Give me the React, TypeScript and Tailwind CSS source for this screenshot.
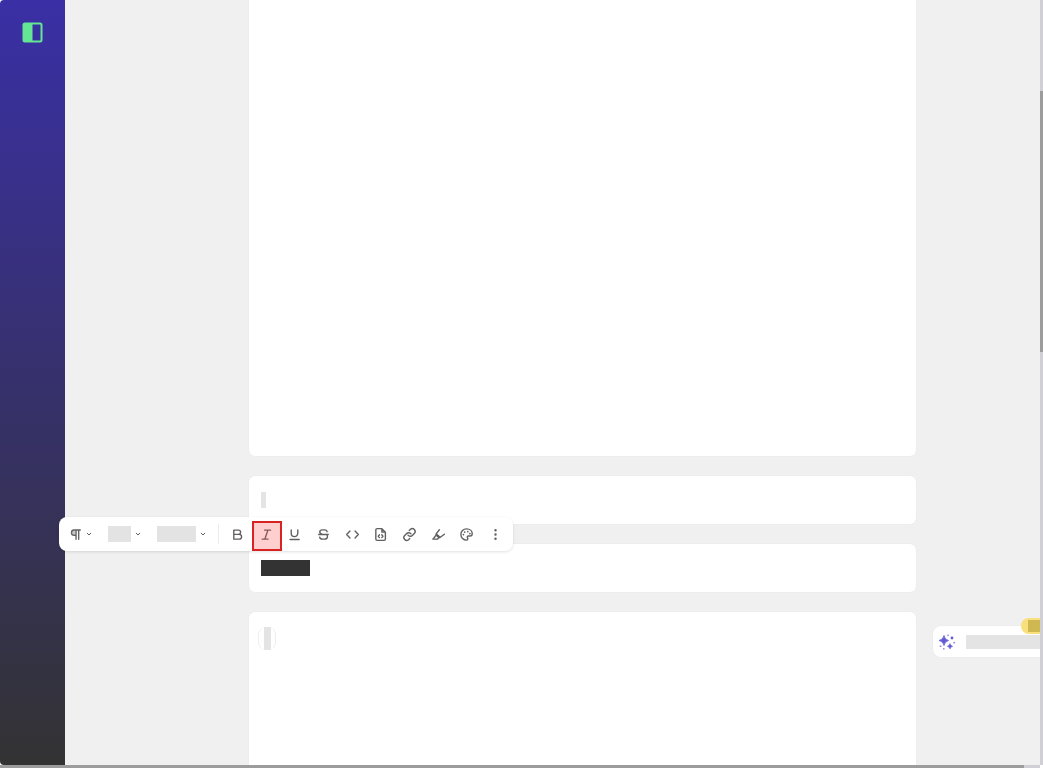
import type { ReactNode } from 'react'

type Tool = {
  name: string
  icon: ReactNode
  active?: boolean
}

const Icon = ({ children }: { children: ReactNode }) => (
  <svg
    viewBox="0 0 16 16"
    className="size-[17px] shrink-0"
    fill="none"
    stroke="currentColor"
    strokeWidth="1.3"
    strokeLinecap="round"
    strokeLinejoin="round"
  >
    {children}
  </svg>
)

const Chevron = () => (
  <svg viewBox="0 0 6 6" className="size-1.5 shrink-0" fill="none" stroke="currentColor" strokeLinecap="round">
    <path d="M1.2 2.2 3 4l1.8-1.8" />
  </svg>
)

const tools: Tool[] = [
  {
    name: 'Bold',
    icon: <path d="M4.5 3.9h4.4a2 2 0 0 1 0 4H4.5zM4.5 7.900h5.100a2.200 2.200 0 0 1 0 4.500H4.500z" />
  },
  {
    name: 'Italic',
    active: true,
    icon: <path d="M6.2 3.9h5.6M3.9 12.300h5.6M9.3 3.9 6.5 12.300" />
  },
  {
    name: 'Underline',
    icon: <path d="M4.9 3.7v3.2a3.1 3.1 0 0 0 6.2 0V3.7M3.8 12.7h8.6" />
  },
  {
    name: 'Strikethrough',
    icon: (
      <path d="M11.4 5.4c-.2-1.100-1.100-1.700-2.400-1.700H7C5.600 3.700 4.500 4.400 4.500 5.700c0 1.400 1.200 1.900 2.700 2.300M3.500 8h9M11 8.300c.5.400.7.900.7 1.600 0 1.500-1.200 2.500-2.700 2.500H7c-1.400 0-2.400-.7-2.600-1.900" />
    )
  },
  {
    name: 'Code',
    icon: <path d="M5.600 4.800 2.500 8l3.100 3.200M10.400 4.800 13.500 8l-3.100 3.200" />
  },
  {
    name: 'Code block',
    icon: (
      <>
        <path d="M9.300 2.500H4.800c-.7 0-1.200.5-1.200 1.200v8.600c0 .7.500 1.200 1.200 1.200h6.600c.7 0 1.200-.5 1.200-1.200V5.800zM9.300 2.500v3.300h3.300" />
        <path d="M7 8.300 5.900 9.600 7 10.900M9.200 8.300l1.100 1.300-1.100 1.300" />
      </>
    )
  },
  {
    name: 'Link',
    icon: (
      <>
        <path d="M6.600 8.600a2.700 2.700 0 0 0 4.100.3l2-2a2.700 2.700 0 0 0-3.800-3.800L7.800 4.200" />
        <path d="M9.400 7.400a2.700 2.700 0 0 0-4.100-.3l-2 2a2.700 2.700 0 0 0 3.800 3.800l1.100-1.100" />
      </>
    )
  },
  {
    name: 'Highlight',
    icon: <path d="M8.800 3.500 5.800 7.400c-.3.500-.2 1 .2 1.400l2 1.900c.4.400 1 .4 1.400.1l4.100-3.100M5.700 8.700 2.700 12.400h4.300l1.300-1.500M6.300 7.800l3.200 2.800" />
  },
  {
    name: 'Color',
    icon: (
      <>
        <path d="M8 2.700a5.300 5.300 0 0 0 0 10.600c.9 0 1.300-.6 1.300-1.200 0-.9-.6-1-.6-1.700 0-.6.500-1 1.100-1h1.500c1.300 0 2.100-.8 2.100-2.100C13.400 4.700 11.100 2.700 8 2.700z" />
        <path d="M5.100 8.100h.01M6.300 5.700h.01M9.200 5.200h.01M11.200 7.100h.01" strokeWidth="1.600" />
      </>
    )
  },
  {
    name: 'More options',
    icon: <path d="M8 4h.01M8 8h.01M8 12h.01" strokeWidth="2.300" />
  }
]

const Sidebar = () => (
  <nav className="flex w-[65px] shrink-0 justify-center rounded-l-sm bg-linear-to-b/srgb from-[#3a2fa5] to-[#333333] pt-[22px]">
    <button type="button" aria-label="Toggle sidebar" className="size-[21px] text-[#64e695]">
      <svg viewBox="0 0 21 21" className="size-[21px]">
        <rect x="1.500" y="1.500" width="18" height="18" rx="1.500" fill="none" stroke="currentColor" strokeWidth="2" />
        <path d="M1.500 1.500h9v18h-9z" fill="currentColor" />
      </svg>
    </button>
  </nav>
)

const Toolbar = () => (
  <div
    role="toolbar"
    aria-label="Text formatting"
    className="absolute top-[517px] left-[59px] flex h-[34px] w-[454px] items-center rounded-lg bg-white pl-2 text-[#606060] shadow-[0_1px_3px_rgba(0,0,0,0.12)]"
  >
    <button type="button" aria-label="Paragraph style" className="flex items-center gap-0.5">
      <Icon>
        <path d="M8.300 8.700H6.700a2.400 2.400 0 0 1 0-4.900h5.800M8.500 3.800v8.700M11 3.800v8.700" />
        <path d="M6.500 4.400h1.400v3.700H6.500a1.800 1.800 0 0 1 0-3.700z" fill="currentColor" fillOpacity=".35" stroke="none" />
      </Icon>
      <Chevron />
    </button>
    <button type="button" aria-label="Font" className="ml-4 flex items-center gap-1">
      <span className="h-4 w-[23px] bg-[#e3e3e3]" />
      <Chevron />
    </button>
    <button type="button" aria-label="Font size" className="ml-4 flex items-center gap-1">
      <span className="h-4 w-[39px] bg-[#e3e3e3]" />
      <Chevron />
    </button>
    <span className="ml-3 h-5 w-px bg-[#ececec]" />
    <div className="mr-[3px] ml-1 flex flex-1">
      {tools.map(({ name, icon, active }) => (
        <button
          key={name}
          type="button"
          aria-label={name}
          aria-pressed={active}
          className="relative flex h-[30px] flex-1 items-center justify-center"
        >
          <Icon>{icon}</Icon>
          {active && (
            <span className="absolute top-0.5 -right-0.5 -bottom-0.5 left-0 border-2 border-[#d92323] bg-[#ff3b3b]/25" />
          )}
        </button>
      ))}
    </div>
  </div>
)

const Assistant = () => (
  <div className="relative mt-[626px] ml-[17px] flex h-[31px] items-center rounded-l-lg bg-white pl-[5px] shadow-[0_0_2px_rgba(0,0,0,0.05)]">
    <svg viewBox="0 0 18 18" className="size-[18px] shrink-0" fill="#635bda">
      <path d="M6 2.500Q6.700 6.700 10.500 7.500 6.700 8.300 6 12.500 5.300 8.300 1 7.500 5.300 6.700 6 2.500z" stroke="#635bda" strokeWidth=".8" />
      <path d="M12 10.500q.4 2.300 2.700 2.800-2.300.5-2.700 2.800-.4-2.300-2.700-2.800 2.300-.5 2.700-2.800z" stroke="#635bda" strokeWidth=".5" />
      <circle cx="14" cy="5" r="1.400" />
      <circle cx="10" cy="2.300" r=".9" opacity=".7" />
      <circle cx="16.200" cy="9.700" r=".9" opacity=".7" />
      <circle cx="2.600" cy="13.200" r=".9" opacity=".7" />
      <circle cx="5.800" cy="15.800" r=".9" opacity=".7" />
    </svg>
    <span className="ml-2.5 h-3.5 flex-1 bg-[#e4e4e4]" />
    <span className="absolute -top-2 right-0 flex h-4 w-[19px] items-center justify-end rounded-l-full bg-[#fae07c]">
      <span className="h-3 w-3 bg-[#cfb751]" />
    </span>
  </div>
)

const App = () => (
  <div className="flex h-screen flex-col overflow-hidden bg-white font-['Inter',sans-serif]">
    <div className="relative flex min-h-0 flex-1">
      <Sidebar />
      <main className="flex min-w-0 flex-1 overflow-hidden bg-[#f0f0f0] pl-[184px]">
        <div className="flex min-w-0 flex-1 flex-col gap-5">
          <section className="h-[456px] shrink-0 rounded-b-md bg-white shadow-[0_0_2px_rgba(0,0,0,0.05)]" />
          <section className="flex h-12 shrink-0 items-center rounded-md bg-white px-3 shadow-[0_0_2px_rgba(0,0,0,0.05)]">
            <span className="h-4 w-[5px] bg-[#e4e4e4]" />
          </section>
          <section className="flex h-12 shrink-0 items-center rounded-md bg-white px-3 shadow-[0_0_2px_rgba(0,0,0,0.05)]">
            <span className="h-4 w-[49px] bg-[#333333]" />
          </section>
          <section className="flex-1 rounded-t-md bg-white px-[9px] pt-[15px] shadow-[0_0_2px_rgba(0,0,0,0.05)]">
            <div className="flex h-[23px] w-[18px] justify-center rounded-lg border-x border-[#eeeeee]">
              <span className="w-[7px] bg-[#e4e4e4]" />
            </div>
          </section>
        </div>
        <aside className="w-[124px] shrink-0">
          <Assistant />
        </aside>
      </main>
      <div className="w-[3px] shrink-0 bg-[#cfcfd5] pt-[91px]">
        <div className="h-[261px] bg-[#9c9c9c]" />
      </div>
      <Toolbar />
    </div>
    <div className="mr-[3px] h-[3px] shrink-0 bg-[#cfcfd5] pr-4">
      <div className="h-full bg-[#9c9c9c]" />
    </div>
  </div>
)

export default App
